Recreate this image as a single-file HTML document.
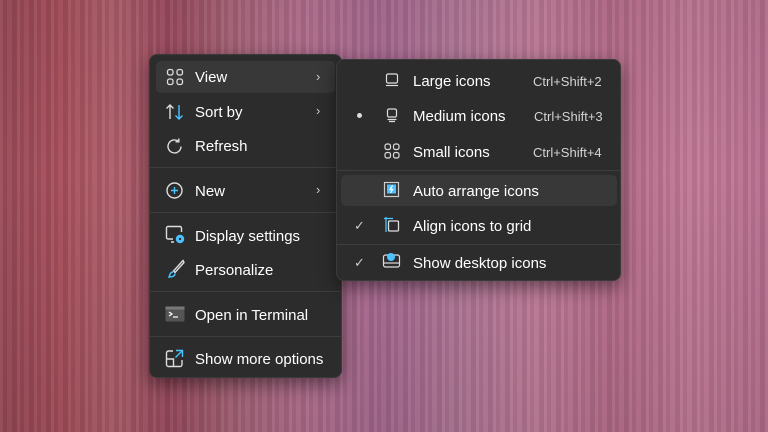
<!DOCTYPE html>
<html><head><style>
*{margin:0;padding:0;box-sizing:border-box}
body{width:768px;height:432px;overflow:hidden;position:relative;font-family:"Liberation Sans",sans-serif;
background:linear-gradient(90deg,#9a4a58 0%,#a8505c 8%,#b0606c 15%,#9c4c60 22%,#a86478 30%,#b47090 40%,#a86a92 50%,#b27898 60%,#c07c9a 70%,#b66c8a 80%,#c27a96 90%,#b87090 100%);}
.stripes{position:absolute;inset:0;background:repeating-linear-gradient(90deg,rgba(255,255,255,.06) 0 3px,rgba(0,0,0,.05) 3px 7px,rgba(255,255,255,.03) 7px 12px,rgba(0,0,0,.07) 12px 17px);}
.shade{position:absolute;inset:0;background:linear-gradient(180deg,rgba(0,0,0,.05),rgba(0,0,0,0) 40%,rgba(0,0,0,.08));}
.menu{position:absolute;background:#2c2c2c;border:1px solid #3a3a3a;border-radius:8px;box-shadow:0 6px 18px rgba(0,0,0,.45);color:#fff;font-size:15px}
.hl{position:absolute;background:#383838;border-radius:5px}
.sep{position:absolute;left:0;right:0;height:1px;background:#3d3d3d}
.t{position:absolute;white-space:nowrap}
.ic{position:absolute}
.chev{position:absolute;color:#ccc;font-size:13px}
.sc{position:absolute;font-size:13px;color:#d4d4d4;white-space:nowrap}
</style></head><body>
<div class="stripes"></div><div class="shade"></div>

<div class="menu" style="left:149px;top:54px;width:193px;height:324px">
 <div class="hl" style="left:6px;top:6px;width:179px;height:32px"></div>
 <div class="sep" style="top:112px"></div>
 <div class="sep" style="top:157px"></div>
 <div class="sep" style="top:236px"></div>
 <div class="sep" style="top:281px"></div>
 <svg class="ic" style="left:16px;top:13px" width="18" height="18" viewBox="0 0 18 18" fill="none" stroke="#ddd" stroke-width="1.3"><rect x="1.5" y="1.5" width="5.5" height="5.5" rx="2"/><rect x="11" y="1.5" width="5.5" height="5.5" rx="2"/><rect x="1.5" y="11" width="5.5" height="5.5" rx="2"/><rect x="11" y="11" width="5.5" height="5.5" rx="2"/></svg>
 <svg class="ic" style="left:15px;top:48px" width="20" height="18" viewBox="0 0 20 18" fill="none" stroke-width="1.4"><path d="M5 16V2M1.5 5.5L5 2l3.5 3.5" stroke="#ddd"/><path d="M14 2v14M10.5 12.5L14 16l3.5-3.5" stroke="#4cc2ff"/></svg>
 <svg class="ic" style="left:15px;top:82px" width="19" height="19" viewBox="0 0 19 19" fill="none" stroke="#ddd" stroke-width="1.4"><path d="M16 9.5A6.5 6.5 0 1 1 13.5 4.3"/><path d="M13.8 1.5v3.3h-3.3"/></svg>
 <svg class="ic" style="left:15px;top:126px" width="19" height="19" viewBox="0 0 19 19" fill="none" stroke-width="1.4"><circle cx="9.5" cy="9.5" r="7.5" stroke="#ddd"/><path d="M9.5 6v7M6 9.5h7" stroke="#4cc2ff"/></svg>
 <svg class="ic" style="left:15px;top:170px" width="21" height="20" viewBox="0 0 21 20" fill="none" stroke-width="1.4"><path d="M8 14H3a1.5 1.5 0 0 1-1.5-1.5V3A1.5 1.5 0 0 1 3 1.5h12A1.5 1.5 0 0 1 16.5 3v4M6 17h3" stroke="#ddd"/><circle cx="15" cy="14" r="3.5" fill="#4cc2ff" stroke="#4cc2ff"/><circle cx="15" cy="14" r="1.2" fill="#2c2c2c" stroke="none"/></svg>
 <svg class="ic" style="left:16px;top:204px" width="19" height="20" viewBox="0 0 19 20" fill="none" stroke-width="1.4"><path d="M17 1.5L7.5 12l1.5 1.5L18 3.5z" stroke="#ddd"/><path d="M7 13c-3 0-3 3-4 5 2 0 6 0 6-3.5" stroke="#4cc2ff"/></svg>
 <svg class="ic" style="left:15px;top:251px" width="20" height="16" viewBox="0 0 20 16"><rect x="0.5" y="0.5" width="19" height="15" rx="1.5" fill="#555"/><rect x="0.5" y="0.5" width="19" height="3" fill="#777"/><path d="M4 6l3 2-3 2" stroke="#fff" stroke-width="1.2" fill="none"/><path d="M8 11h5" stroke="#fff" stroke-width="1.2"/></svg>
 <svg class="ic" style="left:15px;top:294px" width="19" height="19" viewBox="0 0 19 19" fill="none" stroke-width="1.4"><path d="M8 2H3.5A2 2 0 0 0 1.5 4v11.5a2 2 0 0 0 2 2H15a2 2 0 0 0 2-2V11M1.5 10h7v7.5" stroke="#ddd"/><path d="M11 1.5h6.5V8M17.5 1.5l-7 7" stroke="#4cc2ff"/></svg>
 <div class="t" style="left:45px;top:14px">View</div><div class="chev" style="left:166px;top:14px">&#x203A;</div>
 <div class="t" style="left:45px;top:49px">Sort by</div><div class="chev" style="left:166px;top:48px">&#x203A;</div>
 <div class="t" style="left:45px;top:83px">Refresh</div>
 <div class="t" style="left:45px;top:128px">New</div><div class="chev" style="left:166px;top:127px">&#x203A;</div>
 <div class="t" style="left:45px;top:173px">Display settings</div>
 <div class="t" style="left:45px;top:207px">Personalize</div>
 <div class="t" style="left:45px;top:252px">Open in Terminal</div>
 <div class="t" style="left:45px;top:296px">Show more options</div>
</div>

<div class="menu" style="left:336px;top:59px;width:285px;height:222px">
 <div class="hl" style="left:4px;top:115px;width:276px;height:31px"></div>
 <div class="sep" style="top:110px"></div>
 <div class="sep" style="top:184px"></div>
 <svg class="ic" style="left:48px;top:13px" width="14" height="14" viewBox="0 0 14 14" fill="none" stroke="#ddd" stroke-width="1.2"><rect x="1.5" y="1" width="11" height="9" rx="1.5"/><path d="M1 12.5h12"/></svg>
 <svg class="ic" style="left:49px;top:48px" width="12" height="15" viewBox="0 0 12 15" fill="none" stroke="#ddd" stroke-width="1.2"><rect x="1.5" y="1" width="9" height="8" rx="1.5"/><path d="M1.5 11.5h9M3 13.5h6"/></svg>
 <div style="position:absolute;left:20px;top:53px;width:5px;height:5px;border-radius:50%;background:#ddd"></div>
 <svg class="ic" style="left:47px;top:83px" width="16" height="16" viewBox="0 0 16 16" fill="none" stroke="#ddd" stroke-width="1.2"><rect x="1" y="1" width="5.5" height="5.5" rx="2"/><rect x="9.5" y="1" width="5.5" height="5.5" rx="2"/><rect x="1" y="9.5" width="5.5" height="5.5" rx="2"/><rect x="9.5" y="9.5" width="5.5" height="5.5" rx="2"/></svg>
 <svg class="ic" style="left:46px;top:121px" width="17" height="17" viewBox="0 0 17 17" fill="none"><rect x="1.5" y="1.5" width="14" height="14" stroke="#ccc" stroke-width="1.2"/><rect x="4" y="3.5" width="9" height="9" fill="#4cc2ff"/><path d="M9.5 4.5L7 8.5h2.5L7.5 12" stroke="#fff" stroke-width="1.2"/></svg>
 <svg class="ic" style="left:46px;top:156px" width="17" height="17" viewBox="0 0 17 17" fill="none" stroke-width="1.3"><rect x="5.5" y="5" width="10" height="10" rx="1" stroke="#ddd"/><path d="M1 2.5h9M3 1v15" stroke="#4cc2ff"/></svg>
 <div class="t" style="left:17px;top:158px;font-size:13px;color:#ccc">&#x2713;</div>
 <svg class="ic" style="left:45px;top:191px" width="19" height="18" viewBox="0 0 19 18" fill="none" stroke-width="1.2"><rect x="1.5" y="4" width="16" height="12" rx="2" stroke="#ddd"/><path d="M1.5 12h16" stroke="#ddd"/><circle cx="9" cy="6" r="4" fill="#4cc2ff"/></svg>
 <div class="t" style="left:17px;top:195px;font-size:13px;color:#ccc">&#x2713;</div>
 <div class="t" style="left:76px;top:13px">Large icons</div><div class="sc" style="left:196px;top:14px">Ctrl+Shift+2</div>
 <div class="t" style="left:76px;top:48px">Medium icons</div><div class="sc" style="left:197px;top:49px">Ctrl+Shift+3</div>
 <div class="t" style="left:76px;top:84px">Small icons</div><div class="sc" style="left:196px;top:85px">Ctrl+Shift+4</div>
 <div class="t" style="left:76px;top:123px">Auto arrange icons</div>
 <div class="t" style="left:76px;top:158px">Align icons to grid</div>
 <div class="t" style="left:76px;top:195px">Show desktop icons</div>
</div>
</body></html>
